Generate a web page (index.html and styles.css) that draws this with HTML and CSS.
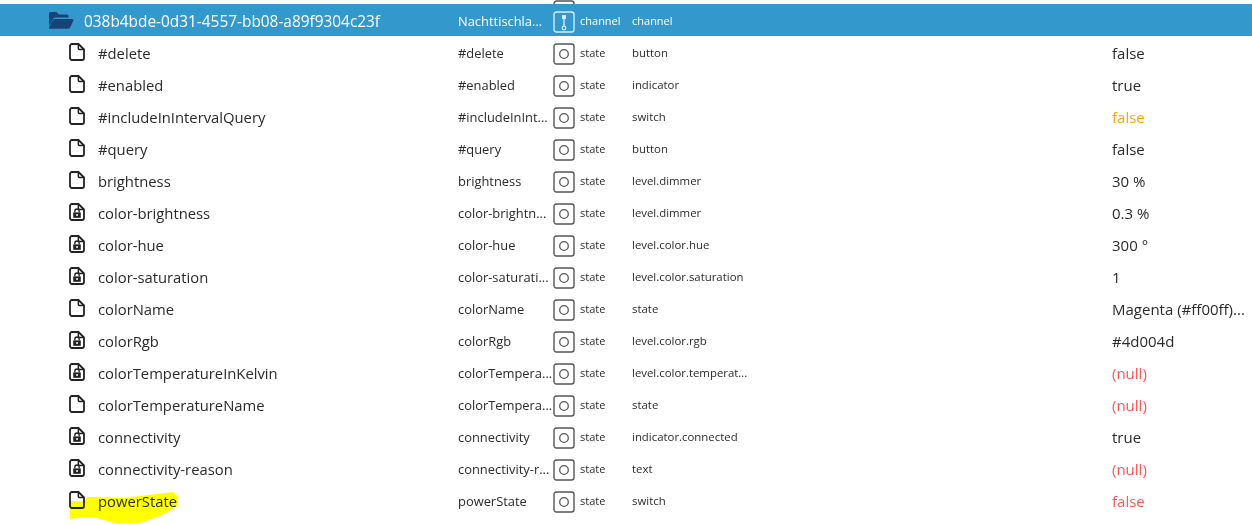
FILE: index.html
```html
<!DOCTYPE html>
<html>
<head>
  <meta charset="utf-8">
  <title>Objects</title>
  <link rel="stylesheet" href="styles.css">
</head>
<body>
  <svg class="defs" width="0" height="0">
    <symbol id="file" viewBox="0 0 16 18">
      <path d="M3 1h6.500L15 6.500V15a2 2 0 0 1-2 2H3a2 2 0 0 1-2-2V3a2 2 0 0 1 2-2z" fill="none" stroke="currentColor" stroke-width="1.800" stroke-linejoin="round"/>
      <path d="M9.300 1v4a1.600 1.600 0 0 0 1.600 1.600H15" fill="none" stroke="currentColor" stroke-width="1.500"/>
    </symbol>
    <symbol id="file-lock" viewBox="0 0 16 18">
      <path d="M3 1h6.500L15 6.500V15a2 2 0 0 1-2 2H3a2 2 0 0 1-2-2V3a2 2 0 0 1 2-2z" fill="none" stroke="currentColor" stroke-width="1.800" stroke-linejoin="round"/>
      <path d="M9.300 1v4a1.600 1.600 0 0 0 1.600 1.600H15" fill="none" stroke="currentColor" stroke-width="1.500"/>
      <path d="M4.200 9.400h7.600v5.400H4.200z" fill="currentColor"/>
      <path d="M5.800 9.400V8.200a2.200 2.200 0 0 1 4.400 0v1.200" fill="none" stroke="currentColor" stroke-width="1.300"/>
      <circle cx="8" cy="12" r="1" fill="#fff"/>
    </symbol>
    <symbol id="folder-open" viewBox="0 0 26 18">
      <path d="M1 15V2.500A1.500 1.500 0 0 1 2.500 1h6l2.500 2.500h8A1.500 1.500 0 0 1 20.500 5v1.500H7.500a3 3 0 0 0-2.700 1.700z" fill="currentColor"/>
      <path d="M6.500 8h18a1 1 0 0 1 .9 1.400l-3.200 7a2.400 2.400 0 0 1-2.100 1.300H2a1 1 0 0 1-.9-1.400l3.400-6.900A2.400 2.400 0 0 1 6.500 8z" fill="currentColor"/>
    </symbol>
    <symbol id="state" viewBox="0 0 22 22">
      <rect x="1" y="1" width="20" height="20" rx="2.500" fill="none" stroke="currentColor" stroke-width="1.400"/>
      <circle cx="11" cy="11" r="4.300" fill="none" stroke="currentColor" stroke-width="1.300"/>
    </symbol>
    <symbol id="channel" viewBox="0 0 22 22">
      <rect x="1" y="1" width="20" height="20" rx="2.500" fill="none" stroke="currentColor" stroke-width="1.400"/>
      <path d="M11 4v11" stroke="currentColor" stroke-width="1.300"/>
      <rect x="9" y="4" width="4" height="4" fill="currentColor"/>
      <circle cx="11" cy="17" r="1.800" fill="none" stroke="currentColor" stroke-width="1.200"/>
    </symbol>
  </svg>

  <div class="tree">
    <div class="row cut">
      <span></span><span></span>
      <svg class="type-icon"><use href="#state"/></svg>
    </div>

    <div class="row selected">
      <span class="name folder">
        <svg class="folder-icon"><use href="#folder-open"/></svg>
        038b4bde-0d31-4557-bb08-a89f9304c23f
      </span>
      <span class="title">Nachttischla...</span>
      <svg class="type-icon"><use href="#channel"/></svg>
      <span class="type">channel</span>
      <span class="role">channel</span>
      <span class="value"></span>
    </div>

    <div class="row">
      <span class="name"><svg class="file-icon"><use href="#file"/></svg>#delete</span>
      <span class="title">#delete</span>
      <svg class="type-icon"><use href="#state"/></svg>
      <span class="type">state</span>
      <span class="role">button</span>
      <span class="value">false</span>
    </div>
    <div class="row">
      <span class="name"><svg class="file-icon"><use href="#file"/></svg>#enabled</span>
      <span class="title">#enabled</span>
      <svg class="type-icon"><use href="#state"/></svg>
      <span class="type">state</span>
      <span class="role">indicator</span>
      <span class="value">true</span>
    </div>
    <div class="row">
      <span class="name"><svg class="file-icon"><use href="#file"/></svg>#includeInIntervalQuery</span>
      <span class="title">#includeInInt...</span>
      <svg class="type-icon"><use href="#state"/></svg>
      <span class="type">state</span>
      <span class="role">switch</span>
      <span class="value orange">false</span>
    </div>
    <div class="row">
      <span class="name"><svg class="file-icon"><use href="#file"/></svg>#query</span>
      <span class="title">#query</span>
      <svg class="type-icon"><use href="#state"/></svg>
      <span class="type">state</span>
      <span class="role">button</span>
      <span class="value">false</span>
    </div>
    <div class="row">
      <span class="name"><svg class="file-icon"><use href="#file"/></svg>brightness</span>
      <span class="title">brightness</span>
      <svg class="type-icon"><use href="#state"/></svg>
      <span class="type">state</span>
      <span class="role">level.dimmer</span>
      <span class="value">30 %</span>
    </div>
    <div class="row">
      <span class="name"><svg class="file-icon"><use href="#file-lock"/></svg>color-brightness</span>
      <span class="title">color-brightn...</span>
      <svg class="type-icon"><use href="#state"/></svg>
      <span class="type">state</span>
      <span class="role">level.dimmer</span>
      <span class="value">0.3 %</span>
    </div>
    <div class="row">
      <span class="name"><svg class="file-icon"><use href="#file-lock"/></svg>color-hue</span>
      <span class="title">color-hue</span>
      <svg class="type-icon"><use href="#state"/></svg>
      <span class="type">state</span>
      <span class="role">level.color.hue</span>
      <span class="value">300 °</span>
    </div>
    <div class="row">
      <span class="name"><svg class="file-icon"><use href="#file-lock"/></svg>color-saturation</span>
      <span class="title">color-saturati...</span>
      <svg class="type-icon"><use href="#state"/></svg>
      <span class="type">state</span>
      <span class="role">level.color.saturation</span>
      <span class="value">1</span>
    </div>
    <div class="row">
      <span class="name"><svg class="file-icon"><use href="#file"/></svg>colorName</span>
      <span class="title">colorName</span>
      <svg class="type-icon"><use href="#state"/></svg>
      <span class="type">state</span>
      <span class="role">state</span>
      <span class="value">Magenta (#ff00ff)...</span>
    </div>
    <div class="row">
      <span class="name"><svg class="file-icon"><use href="#file-lock"/></svg>colorRgb</span>
      <span class="title">colorRgb</span>
      <svg class="type-icon"><use href="#state"/></svg>
      <span class="type">state</span>
      <span class="role">level.color.rgb</span>
      <span class="value">#4d004d</span>
    </div>
    <div class="row">
      <span class="name"><svg class="file-icon"><use href="#file-lock"/></svg>colorTemperatureInKelvin</span>
      <span class="title">colorTempera...</span>
      <svg class="type-icon"><use href="#state"/></svg>
      <span class="type">state</span>
      <span class="role">level.color.temperat...</span>
      <span class="value red">(null)</span>
    </div>
    <div class="row">
      <span class="name"><svg class="file-icon"><use href="#file"/></svg>colorTemperatureName</span>
      <span class="title">colorTempera...</span>
      <svg class="type-icon"><use href="#state"/></svg>
      <span class="type">state</span>
      <span class="role">state</span>
      <span class="value red">(null)</span>
    </div>
    <div class="row">
      <span class="name"><svg class="file-icon"><use href="#file-lock"/></svg>connectivity</span>
      <span class="title">connectivity</span>
      <svg class="type-icon"><use href="#state"/></svg>
      <span class="type">state</span>
      <span class="role">indicator.connected</span>
      <span class="value">true</span>
    </div>
    <div class="row">
      <span class="name"><svg class="file-icon"><use href="#file-lock"/></svg>connectivity-reason</span>
      <span class="title">connectivity-r...</span>
      <svg class="type-icon"><use href="#state"/></svg>
      <span class="type">state</span>
      <span class="role">text</span>
      <span class="value red">(null)</span>
    </div>
    <div class="row">
      <span class="name"><svg class="file-icon"><use href="#file"/></svg>powerState</span>
      <span class="title">powerState</span>
      <svg class="type-icon"><use href="#state"/></svg>
      <span class="type">state</span>
      <span class="role">switch</span>
      <span class="value red">false</span>
    </div>
  </div>

  <!-- marker scribble on top of the screenshot -->
  <svg class="scribble" width="110" height="35" viewBox="70 490 110 35">
    <path d="M70 501L85 501L87 497L98 497L125 498L140 496L157 494L173 492L178 497L178 506L160 516L140 523L117 524L97 518L85 517L70 519z" fill="#ffff00"/>
  </svg>
</body>
</html>
```

FILE: styles.css
```css
html, body {
  margin: 0;
  height: 100%;
  overflow: hidden;
}

body {
  position: relative;
  background: #fff;
  color: #2b2b2b;
  font-family: "Open Sans", "Noto Sans", Arial, sans-serif;
}

.defs {
  position: absolute;
}

.row {
  display: grid;
  grid-template-columns: 458px 91px 31px 52px 480px 140px;
  align-items: center;
  height: 32px;
  white-space: nowrap;
}

.row > span {
  padding-top: 2px;
}

.row > .type,
.row > .role {
  padding-top: 0;
}

.cut {
  height: 4px;
  overflow: hidden;
  align-items: end;
}

.cut .type-icon {
  margin-top: 0;
  margin-bottom: 3px;
}

.selected {
  background: #3399cc;
  color: #fff;
}

.name {
  display: flex;
  align-items: center;
  padding-left: 69px;
  font-size: 14.8px;
}

.folder {
  padding-left: 48px;
  font-size: 15.4px;
}

.file-icon {
  width: 16px;
  height: 18px;
  margin: -2px 13px 0 0;
  flex: none;
  color: #222;
}

.folder-icon {
  width: 26px;
  height: 18px;
  margin: -2px 10px 0 0;
  flex: none;
  color: #164477;
}

.title {
  font-size: 12.9px;
}

.type-icon {
  width: 22px;
  height: 22px;
  margin: 3px 0 0 4px;
  color: #555;
}

.selected .type-icon {
  color: #d5ecf8;
}

.type {
  font-size: 11px;
}

.role {
  font-size: 11.4px;
}

.selected .role {
  font-size: 11px;
}

.value {
  font-size: 15px;
}

.orange {
  color: #ffa500;
}

.red {
  color: #ff5555;
}

.scribble {
  position: absolute;
  left: 70px;
  top: 490px;
  mix-blend-mode: multiply;
}
```
